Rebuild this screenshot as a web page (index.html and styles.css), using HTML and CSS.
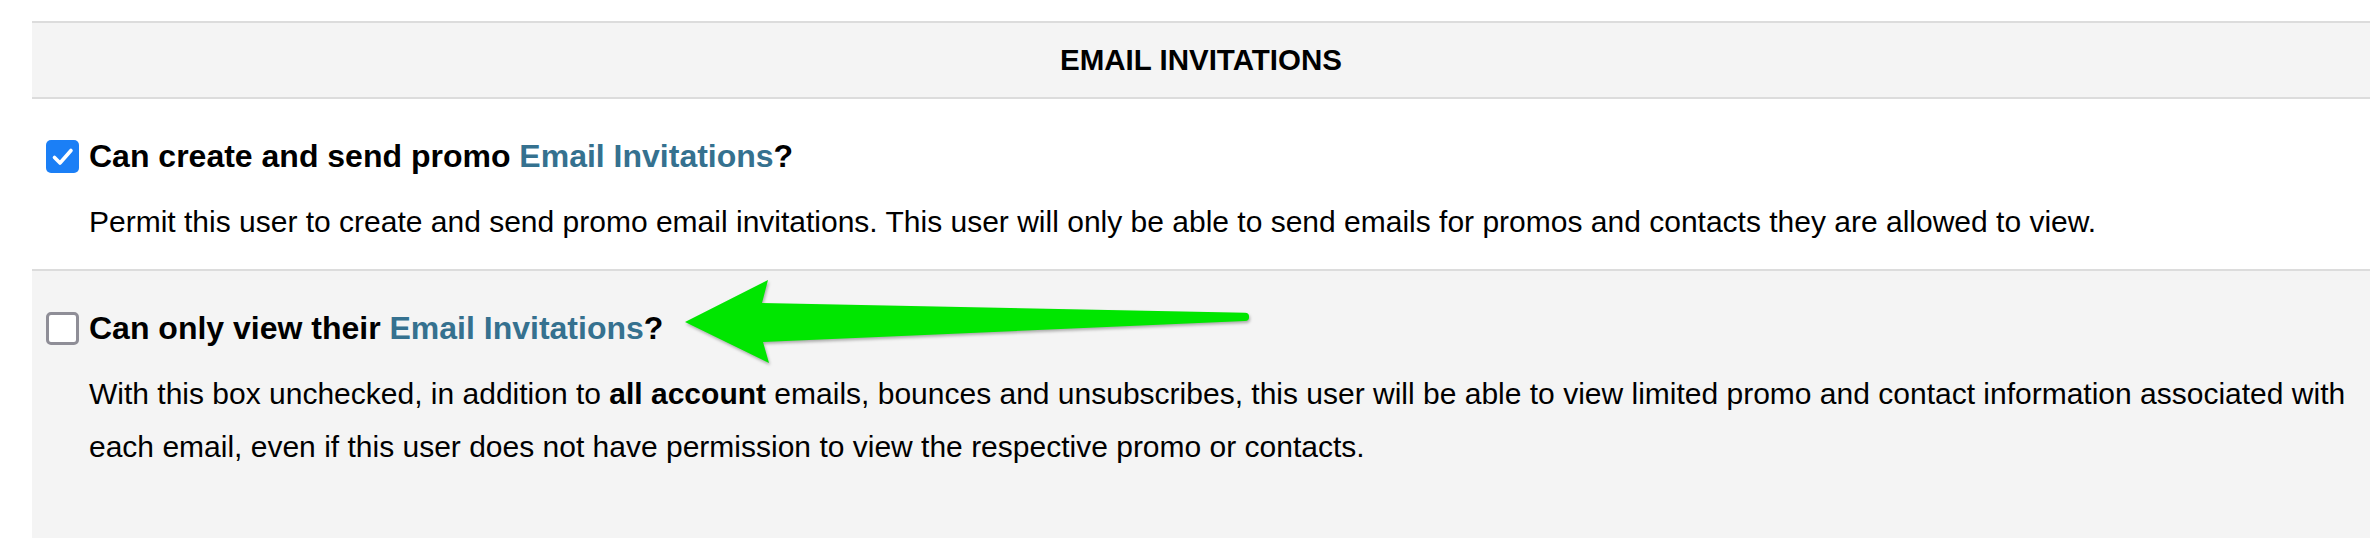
FILE: index.html
```html
<!DOCTYPE html>
<html lang="en">
<head>
<meta charset="utf-8">
<title>Email Invitations</title>
<link rel="stylesheet" href="styles.css">
</head>
<body>
<div class="page">
  <div class="panel-head">EMAIL INVITATIONS</div>

  <div class="perm perm--first">
    <div class="perm-title">
      <span class="cb cb--on">
        <svg viewBox="0 0 33 33" width="33" height="33"><path d="M8.5 17.5 L14 23 L25 10.5" fill="none" stroke="#fff" stroke-width="3.6" stroke-linecap="round" stroke-linejoin="round"/></svg>
      </span>
      <span>Can create and send promo <a class="link">Email Invitations</a>?</span>
    </div>
    <p class="perm-desc">Permit this user to create and send promo email invitations. This user will only be able to send emails for promos and contacts they are allowed to view.</p>
  </div>

  <div class="perm perm--alt">
    <div class="perm-title">
      <span class="cb cb--off"></span>
      <span>Can only view their <a class="link">Email Invitations</a>?</span>
    </div>
    <p class="perm-desc">With this box unchecked, in addition to <b>all account</b> emails, bounces and unsubscribes, this user will be able to view limited promo and contact information associated with each email, even if this user does not have permission to view the respective promo or contacts.</p>
  </div>

  <svg class="arrow" viewBox="0 0 2370 538" width="2370" height="538">
    <path d="M685 322 L768 280 L762 303 L1245 312.8 A4.1 4.1 0 0 1 1245 321 L763 342 L769 363 Z" fill="#00e600"/>
  </svg>
</div>
</body>
</html>
```

FILE: styles.css
```css
html, body {
  margin: 0;
  height: 100%;
}

body {
  font-family: "Liberation Sans", Arial, Helvetica, sans-serif;
  color: #000;
  background: #fff;
}

.page {
  position: relative;
  box-sizing: border-box;
  height: 538px;
  padding: 21px 0 0 32px;
  display: flex;
  flex-direction: column;
  overflow: hidden;
}

.panel-head {
  flex: none;
  height: 74px;
  display: flex;
  align-items: center;
  justify-content: center;
  background: #f4f4f4;
  border-top: 2px solid #dcdcdc;
  border-bottom: 2px solid #dcdcdc;
  font-weight: bold;
  font-size: 29.5px;
}

.perm {
  padding: 37px 10px 21.5px 14px;
}

.perm--first {
  flex: none;
  border-bottom: 2px solid #dcdcdc;
}

.perm--alt {
  flex: 1;
  background: #f4f4f4;
}

.perm-title {
  display: flex;
  align-items: center;
  gap: 10px;
  font-weight: bold;
  font-size: 32px;
  line-height: 40px;
}

.cb {
  flex: none;
  box-sizing: border-box;
  width: 33px;
  height: 33px;
  border-radius: 5px;
  display: block;
}

.cb svg {
  display: block;
}

.cb--on {
  background: #1b7ff6;
}

.cb--off {
  background: #fff;
  border: 3px solid #8f8e97;
}

.link {
  color: #35718f;
  text-decoration: none;
}

.perm-desc {
  margin: 18.5px 0 0 43px;
  font-size: 30px;
  line-height: 53px;
}

.perm-desc b {
  font-weight: bold;
}

.arrow {
  position: absolute;
  left: 0;
  top: 0;
  pointer-events: none;
  filter: drop-shadow(1px 2px 1.5px rgba(0, 0, 0, 0.3));
}
```
